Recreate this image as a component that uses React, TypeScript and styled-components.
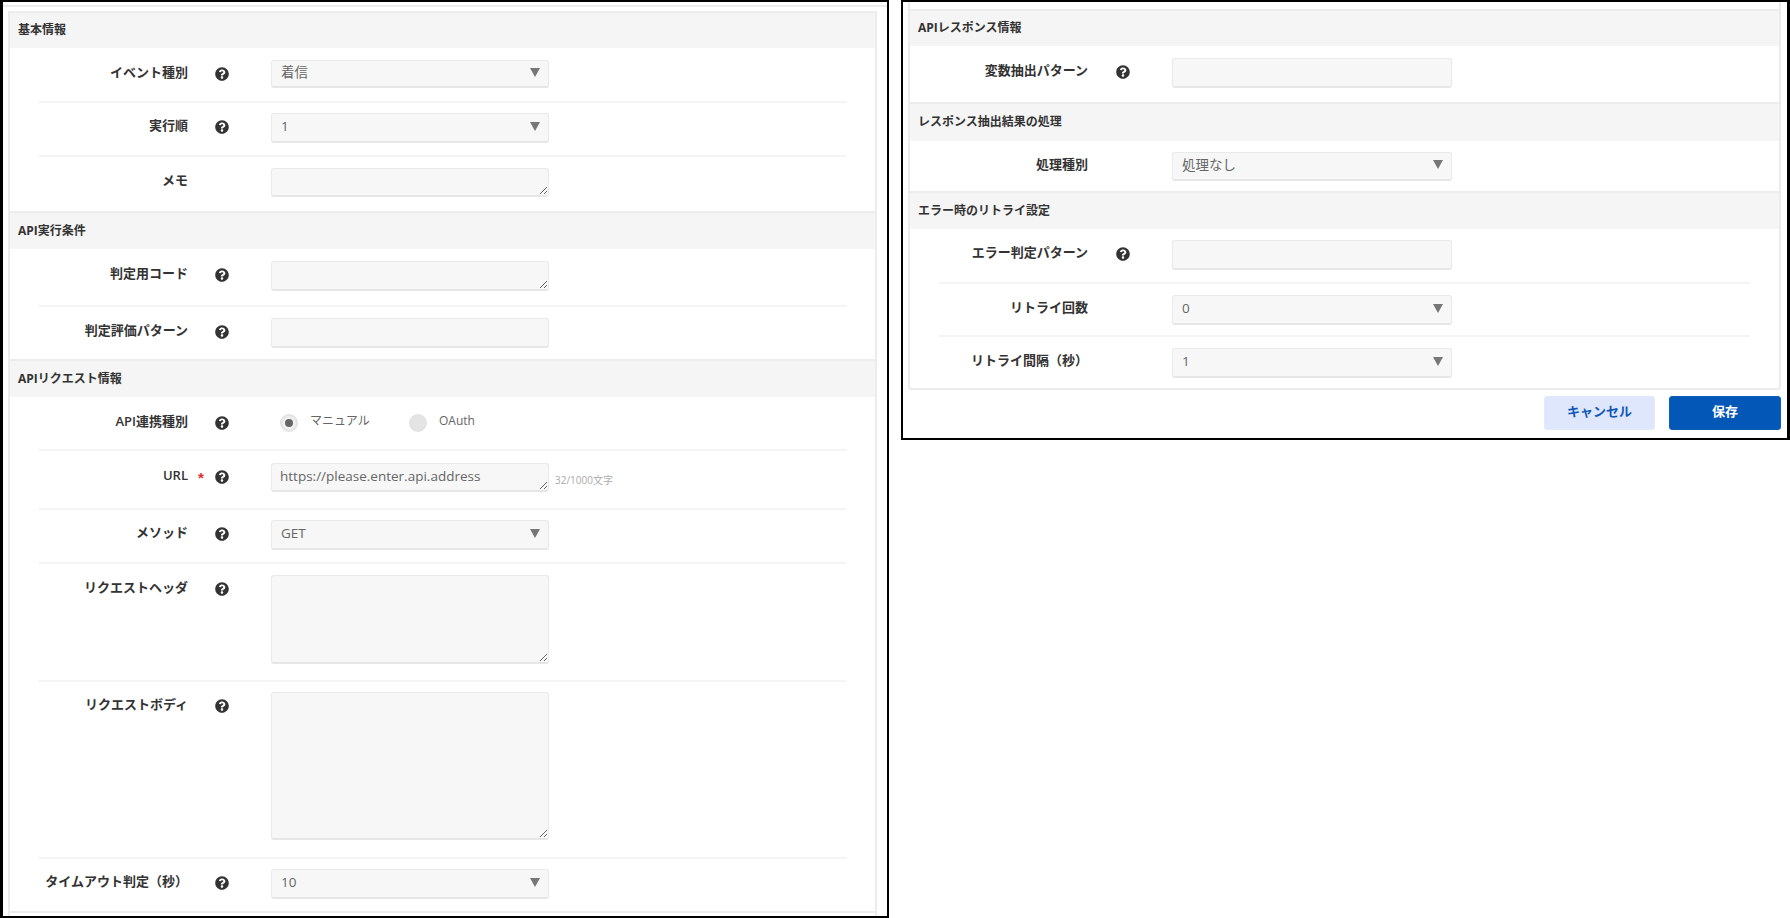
import React from "react";
import styled, { createGlobalStyle } from "styled-components";
import { FaQuestionCircle } from "react-icons/fa";

const Global = createGlobalStyle`
  html, body { margin: 0; padding: 0; background: #fff; height: 918px; overflow: hidden; }
  body { font-family: "Open Sans", "Noto Sans CJK JP", sans-serif; }
  * { box-sizing: border-box; }
`;

const Page = styled.div`
  display: flex;
  align-items: flex-start;
  width: 1790px;
  height: 918px;
  overflow: hidden;
`;

const Frame = styled.div<{ $left?: boolean }>`
  display: flex;
  flex-direction: column;
  overflow: hidden;
  flex: none;
  background: #fff;
  border-style: solid;
  border-color: #000;
  border-width: ${(p) => (p.$left ? "2px 2px 2px 3px" : "2px 3px 2px 2px")};
  width: 889px;
  height: ${(p) => (p.$left ? "918px" : "440px")};
  margin-left: ${(p) => (p.$left ? "0" : "12px")};
  --control-w: ${(p) => (p.$left ? "278px" : "280px")};
  --req-w: ${(p) => (p.$left ? "27px" : "28px")};
`;

const TopRule = styled.div`
  height: 2px;
  margin-top: 3px;
  background: #ececec;
  flex: none;
`;

const Card = styled.div<{ $left?: boolean }>`
  border-style: solid;
  border-color: #ececec;
  border-width: 0 2px;
  flex: 1;
  margin: ${(p) => (p.$left ? "4px 10px 0 5px" : "0 6px 0 5px")};
  padding-top: ${(p) => (p.$left ? "0" : "7px")};
`;

const RightCard = styled(Card)`
  flex: none;
  border-bottom-width: 2px;
  border-radius: 0 0 3px 3px;
`;

const SectionHeader = styled.h3<{ $h: number }>`
  margin: 0;
  height: ${(p) => p.$h}px;
  padding: 0 0 3px 8px;
  display: flex;
  align-items: center;
  background: #f5f5f5;
  border-top: 2px solid #ececec;
  font-size: 12px;
  font-weight: 700;
  color: #333;
`;

const CardEnd = styled.div`
  border-top: 2px solid #ececec;
`;

const Row = styled.div<{ $pt: number; $pb: number; $h: number; $rule?: boolean }>`
  --ctrl-h: ${(p) => p.$h}px;
  margin: 0 29px;
  padding: ${(p) => p.$pt}px 0 ${(p) => p.$pb}px;
  display: grid;
  grid-template-columns: 149px var(--req-w) 14px 42px 1fr;
  align-items: start;
  border-bottom: ${(p) => (p.$rule ? "2px solid #f4f4f4" : "0")};
`;

const Label = styled.label`
  font-size: 13px;
  line-height: 20px;
  padding-top: 2px;
  font-weight: 600;
  color: #333;
  text-align: right;
  white-space: nowrap;
`;

const Required = styled.span`
  font-family: "Liberation Sans", sans-serif;
  font-size: 15px;
  line-height: 20px;
  padding: 5px 0 0 10px;
  font-weight: 700;
  color: #e0302c;
`;

const HelpIcon = styled(FaQuestionCircle)`
  width: 14px;
  height: 14px;
  margin-top: 7px;
  color: #333;
  display: block;
`;

const ControlCell = styled.div`
  display: flex;
  align-items: flex-start;
  min-height: var(--ctrl-h);
`;

const controlBase = `
  width: var(--control-w);
  height: var(--ctrl-h);
  background: #f7f7f7;
  border: 1px solid #e9e9e9;
  border-bottom: 2px solid #e6e6e6;
  border-radius: 3px;
  font-family: inherit;
  font-size: 13.5px;
  color: #666;
  margin: 0;
  outline: none;
  display: block;
`;

const TextInput = styled.input`
  ${controlBase}
  padding: 0 8px;
`;

const TextArea = styled.textarea`
  ${controlBase}
  padding: 2px 8px;
  line-height: 20px;
  resize: both;
`;

const SelectBox = styled.div`
  ${controlBase}
  display: flex;
  align-items: center;
  justify-content: space-between;
  padding: 0 8px 3px 9px;
  line-height: 20px;
`;

const Caret = styled.span`
  width: 0;
  height: 0;
  border-left: 5px solid transparent;
  border-right: 5px solid transparent;
  border-top: 9px solid #777;
`;

const RadioGroup = styled.div`
  display: flex;
  align-items: center;
  height: var(--ctrl-h);
  padding-left: 9px;
`;

const RadioOption = styled.span`
  display: flex;
  align-items: center;
  width: 129px;
  gap: 12px;
`;

const RadioMark = styled.span<{ $on?: boolean }>`
  width: 18px;
  height: 18px;
  border-radius: 50%;
  flex: none;
  display: flex;
  align-items: center;
  justify-content: center;
  background: ${(p) => (p.$on ? "#f0f0f0" : "#e4e4e4")};
  border: 2px solid #e2e2e2;
  &::after {
    content: "";
    width: 8px;
    height: 8px;
    border-radius: 50%;
    background: ${(p) => (p.$on ? "#666" : "transparent")};
  }
`;

const RadioText = styled.span`
  font-size: 12px;
  line-height: 16px;
  color: #666;
  margin-top: -4px;
`;

const Counter = styled.span`
  font-size: 10px;
  line-height: 12px;
  color: #aaa;
  margin: 11px 0 0 6px;
  white-space: nowrap;
`;

const Footer = styled.div`
  display: flex;
  justify-content: flex-end;
  gap: 14px;
  margin: 6px 6px 0 0;
`;

const Button = styled.button<{ $primary?: boolean }>`
  width: ${(p) => (p.$primary ? "112px" : "111px")};
  height: 34px;
  border-radius: 3px;
  border: 1px solid ${(p) => (p.$primary ? "#0f5fb5" : "#e3eafb")};
  background: ${(p) => (p.$primary ? "#0357b6" : "#dfe7fc")};
  color: ${(p) => (p.$primary ? "#fff" : "#0f58b8")};
  font-family: inherit;
  font-size: 13px;
  font-weight: 700;
  padding: 0 0 5px;
`;

type FieldProps = {
  label: string;
  help?: boolean;
  required?: boolean;
  pt: number;
  h: number;
  pb: number;
  rule?: boolean;
  children: React.ReactNode;
};

function Field({ label, help = true, required, pt, h, pb, rule, children }: FieldProps) {
  return (
    <Row $pt={pt} $pb={pb} $h={h} $rule={rule}>
      <Label>{label}</Label>
      {required ? <Required>*</Required> : <span />}
      {help ? <HelpIcon /> : <span />}
      <span />
      <ControlCell>{children}</ControlCell>
    </Row>
  );
}

function Select({ value }: { value: string }) {
  return (
    <SelectBox>
      {value}
      <Caret />
    </SelectBox>
  );
}

export default function App() {
  return (
    <Page>
      <Global />
      <Frame $left>
        <TopRule />
        <Card $left>
          <SectionHeader $h={37}>基本情報</SectionHeader>
          <Field label="イベント種別" pt={12} h={28} pb={13} rule><Select value="着信" /></Field>
          <Field label="実行順" pt={10} h={30} pb={12} rule><Select value="1" /></Field>
          <Field label="メモ" help={false} pt={11} h={29} pb={14}><TextArea readOnly /></Field>

          <SectionHeader $h={38}>API実行条件</SectionHeader>
          <Field label="判定用コード" pt={12} h={30} pb={14} rule><TextArea readOnly /></Field>
          <Field label="判定評価パターン" pt={11} h={30} pb={11}><TextInput readOnly /></Field>

          <SectionHeader $h={38}>APIリクエスト情報</SectionHeader>
          <Field label="API連携種別" pt={12} h={28} pb={12} rule>
            <RadioGroup>
              <RadioOption><RadioMark $on /><RadioText>マニュアル</RadioText></RadioOption>
              <RadioOption><RadioMark /><RadioText>OAuth</RadioText></RadioOption>
            </RadioGroup>
          </Field>
          <Field label="URL" required pt={12} h={29} pb={16} rule>
            <TextArea readOnly defaultValue="https://please.enter.api.address" />
            <Counter>32/1000文字</Counter>
          </Field>
          <Field label="メソッド" pt={10} h={30} pb={12} rule><Select value="GET" /></Field>
          <Field label="リクエストヘッダ" pt={11} h={89} pb={16} rule><TextArea readOnly /></Field>
          <Field label="リクエストボディ" pt={10} h={148} pb={17} rule><TextArea readOnly /></Field>
          <Field label="タイムアウト判定（秒）" pt={10} h={30} pb={12}><Select value="10" /></Field>
          <CardEnd />
        </Card>
      </Frame>

      <Frame>
        <RightCard>
          <SectionHeader $h={37}>APIレスポンス情報</SectionHeader>
          <Field label="変数抽出パターン" pt={12} h={30} pb={14}><TextInput readOnly /></Field>
          <SectionHeader $h={39}>レスポンス抽出結果の処理</SectionHeader>
          <Field label="処理種別" help={false} pt={11} h={29} pb={10}><Select value="処理なし" /></Field>
          <SectionHeader $h={38}>エラー時のリトライ設定</SectionHeader>
          <Field label="エラー判定パターン" pt={11} h={30} pb={12} rule><TextInput readOnly /></Field>
          <Field label="リトライ回数" help={false} pt={11} h={30} pb={10} rule><Select value="0" /></Field>
          <Field label="リトライ間隔（秒）" help={false} pt={11} h={30} pb={10}><Select value="1" /></Field>
        </RightCard>
        <Footer>
          <Button>キャンセル</Button>
          <Button $primary>保存</Button>
        </Footer>
      </Frame>
    </Page>
  );
}
